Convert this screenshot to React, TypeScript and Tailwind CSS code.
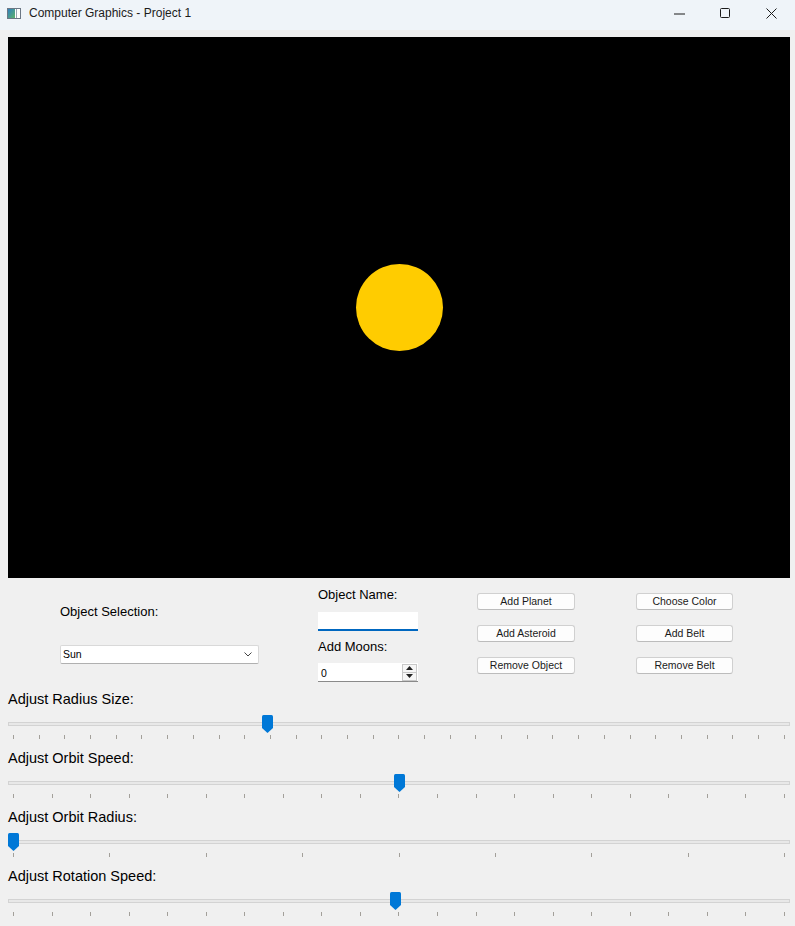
import React from "react";

const sliders = [
  { label: "Adjust Radius Size:", ticks: 31, value: 33 },
  { label: "Adjust Orbit Speed:", ticks: 21, value: 50 },
  { label: "Adjust Orbit Radius:", ticks: 9, value: 0 },
  { label: "Adjust Rotation Speed:", ticks: 21, value: 49.5 },
];

const buttonsLeft = ["Add Planet", "Add Asteroid", "Remove Object"];
const buttonsRight = ["Choose Color", "Add Belt", "Remove Belt"];

const AppIcon = () => (
  <svg width="14" height="11" viewBox="0 0 14 11">
    <defs>
      <linearGradient id="ic" x1="0" y1="0" x2="1" y2="1">
        <stop offset="0" stopColor="#2f7fbf" />
        <stop offset="1" stopColor="#5fb36a" />
      </linearGradient>
    </defs>
    <rect x="0.5" y="0.5" width="13" height="10" fill="#ffffff" stroke="#6b7785" />
    <rect x="1" y="1" width="7" height="9" fill="url(#ic)" />
    <rect x="9" y="1" width="1" height="9" fill="#9aa6b2" />
  </svg>
);

const Thumb = () => (
  <svg width="11" height="18" viewBox="0 0 11 18">
    <path d="M0 1.5 Q0 0 1.5 0 H9.5 Q11 0 11 1.5 V13 L5.5 18 L0 13 Z" fill="#0078d7" />
  </svg>
);

const Slider = ({ label, ticks, value }: { label: string; ticks: number; value: number }) => (
  <div className="h-[59px]">
    <div className="ml-[8px] h-[17px] text-[14.5px] leading-[17px] text-black">{label}</div>
    <div className="relative ml-[8px] w-[782px] h-[42px] flex flex-col pt-[14px]">
      <div className="h-[4px] border border-[#d3d3d3] bg-[#e8e8e8]"></div>
      <div className="mt-[9px] flex justify-between px-[5px]">
        {Array.from({ length: ticks }).map((_, i) => (
          <div key={i} className="w-px h-[4px] bg-[#a3a09a]"></div>
        ))}
      </div>
      {/* slider handle */}
      <div className="absolute top-[7px] flex" style={{ left: `${(value / 100) * 771}px` }}>
        <Thumb />
      </div>
    </div>
  </div>
);

const Button = ({ text }: { text: string }) => (
  <div className="h-[17px] flex items-center justify-center rounded-[3px] border border-[#d0d0d0] border-b-[#bcbcbc] bg-[#fdfdfd] text-[10.5px] text-[#1a1a1a]">
    {text}
  </div>
);

export default function App() {
  return (
    <div className="w-[795px] h-[926px] overflow-hidden bg-[#f0f0f0] font-['Liberation_Sans',Arial,sans-serif]">
      {/* title bar */}
      <div className="h-[30px] flex items-center bg-[#eff4f9] pb-[4px]">
        <div className="ml-[7px] flex">
          <AppIcon />
        </div>
        <span className="ml-[8px] text-[12px] text-[#1b1b1b]">Computer Graphics - Project 1</span>
        <div className="ml-auto flex items-center">
          <div className="w-[46px] flex justify-center">
            <svg width="11" height="11" viewBox="0 0 11 11">
              <path d="M0 6 H11" stroke="#1b1b1b" strokeWidth="1" />
            </svg>
          </div>
          <div className="w-[46px] flex justify-center">
            <svg width="10" height="10" viewBox="0 0 10 10">
              <rect x="0.5" y="0.5" width="9" height="9" rx="1" fill="none" stroke="#1b1b1b" />
            </svg>
          </div>
          <div className="w-[46px] flex justify-center mr-[1px]">
            <svg width="11" height="11" viewBox="0 0 11 11">
              <path d="M0.5 0.5 L10.5 10.5 M10.5 0.5 L0.5 10.5" stroke="#1b1b1b" strokeWidth="1" />
            </svg>
          </div>
        </div>
      </div>

      {/* render canvas */}
      <div className="mt-[7px] ml-[8px] w-[782px] h-[541px] bg-black flex items-center justify-center">
        <div className="w-[87px] h-[87px] rounded-full bg-[#ffcc00]"></div>
      </div>

      {/* controls */}
      <div className="flex h-[113px] text-black">
        <div className="ml-[60px] w-[199px] pt-[26px]">
          <div className="text-[13px] leading-[16px]">Object Selection:</div>
          <div className="mt-[25px] h-[19px] flex items-center justify-between bg-white border border-[#d9d9d9] border-b-[#b0b0b0] rounded-[2px] pl-[2px] pr-[6px] text-[10.5px]">
            <span>Sun</span>
            <svg width="8" height="5" viewBox="0 0 8 5">
              <path d="M0.5 0.5 L4 4 L7.5 0.5" fill="none" stroke="#444" strokeWidth="1" />
            </svg>
          </div>
        </div>

        <div className="ml-[59px] w-[100px] pt-[9px]">
          <div className="text-[13px] leading-[16px]">Object Name:</div>
          <div className="mt-[9px] h-[19px] bg-white border-b-2 border-[#0067c0]"></div>
          <div className="mt-[8px] text-[13px] leading-[16px]">Add Moons:</div>
          <div className="mt-[8px] h-[19px] flex items-center bg-white border-b border-[#8a8a8a] pl-[3px] text-[10.5px]">
            <span className="flex-1 pt-[3px]">0</span>
            <div className="mr-[1px] flex flex-col w-[15px] h-[17px] border border-[#c8c8c8]">
              <div className="flex-1 flex items-center justify-center border-b border-[#c8c8c8] bg-[#f6f6f6]">
                <svg width="7" height="4" viewBox="0 0 7 4">
                  <path d="M0 4 L3.5 0 L7 4 Z" fill="#222" />
                </svg>
              </div>
              <div className="flex-1 flex items-center justify-center bg-[#f6f6f6]">
                <svg width="7" height="4" viewBox="0 0 7 4">
                  <path d="M0 0 L3.5 4 L7 0 Z" fill="#222" />
                </svg>
              </div>
            </div>
          </div>
        </div>

        <div className="ml-[59px] w-[98px] pt-[15px] flex flex-col gap-[15px]">
          {buttonsLeft.map((b) => (
            <Button key={b} text={b} />
          ))}
        </div>

        <div className="ml-[61px] w-[97px] pt-[15px] flex flex-col gap-[15px]">
          {buttonsRight.map((b) => (
            <Button key={b} text={b} />
          ))}
        </div>
      </div>

      {/* sliders */}
      {sliders.map((s) => (
        <Slider key={s.label} label={s.label} ticks={s.ticks} value={s.value} />
      ))}
    </div>
  );
}
